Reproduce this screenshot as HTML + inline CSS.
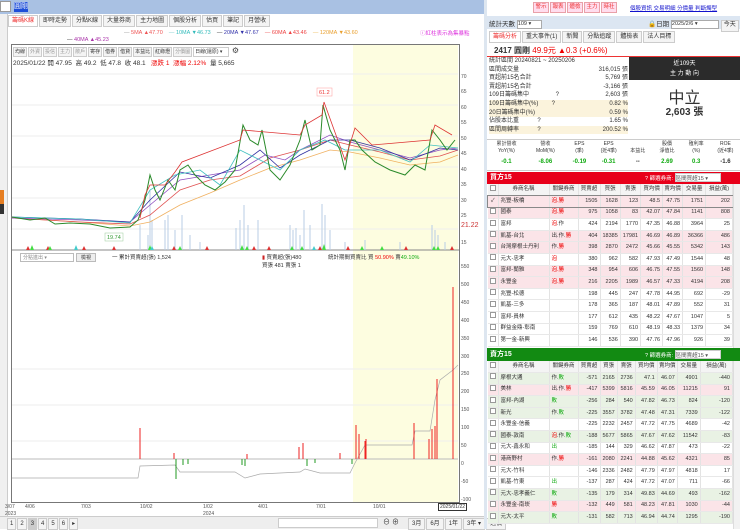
<!DOCTYPE html>
<html><head><meta charset="utf-8"><style>
*{margin:0;padding:0;box-sizing:border-box}
body{width:740px;height:529px;overflow:hidden;background:#fff;font-family:"Liberation Sans","Noto Sans CJK TC",sans-serif;font-size:6px;color:#333;position:relative}
.a{position:absolute;white-space:nowrap}
.tab{display:inline-block;border:1px solid #ccc;background:#f4f4f4;padding:1px 3px;height:12px;line-height:9px;font-size:6px;margin-right:1px}
.tb{display:inline-block;border:1px solid #ccc;background:#f4f4f4;padding:0 1px;height:10px;line-height:8px;font-size:5px;margin-right:1px}
.rb{display:inline-block;border:1px solid #e9a0a8;background:#fde;color:#e33;width:16px;height:11px;line-height:9px;font-size:5.5px;text-align:center;margin-right:1px}
table{border-collapse:collapse;font-size:5.5px}
td{height:11.6px;line-height:9px;border-right:1px solid #e3e3e3;border-bottom:1px solid #e8e8e8;padding:0 2px;text-align:right;white-space:nowrap}
td.n{text-align:left}
td.c{text-align:center;padding:0}
.cb{display:inline-block;width:6px;height:6px;border:1px solid #999;background:#fff}
.r{color:#e00}.g{color:#1a1}
.pk td{background:#fbe4e8}.gn td{background:#e9f2e4}
</style></head><body>
<div class="a" style="left:0;top:0;width:484px;height:14px;background:#a9c1e3"></div>
<div class="a" style="left:0;top:1px;width:11px;height:11px;background:#fff;border:1px solid #999"></div>
<div class="a" style="left:14px;top:2px;width:14px;height:10px;background:#1d4ed8;color:#fff;font-size:7px;line-height:10px">圓剛</div>
<div class="a" style="left:0;top:14px;width:8px;height:515px;background:#f0f0f0;border-right:1px solid #ccc"></div>
<div class="a" style="left:0;top:190px;width:4px;height:14px;background:#e67e22"></div>
<div class="a" style="left:0;top:204px;width:4px;height:10px;background:#333"></div>
<div class="a" style="left:8px;top:15px">
<span class="tab" style="color:#e33;background:#fff">籌碼K線</span><span class="tab">即時走勢</span><span class="tab">分點K線</span><span class="tab">大量券商</span><span class="tab">主力地圖</span><span class="tab">個股分析</span><span class="tab">估買</span><span class="tab">筆記</span><span class="tab">月營收</span></div>
<div class="a" style="left:124px;top:30px;font-size:5.5px"><span style="color:#999">—</span> <span style="color:#e55">5MA ▲47.70</span> &nbsp; &nbsp;<span style="color:#7cc">—</span> <span style="color:#3bb">10MA ▼46.73</span> &nbsp; &nbsp;<span>—</span> <span style="color:#33a">20MA ▼47.67</span> &nbsp; &nbsp;<span style="color:#e55">—</span> <span style="color:#e44">60MA ▲43.46</span> &nbsp; &nbsp;<span style="color:#eb5">—</span> <span style="color:#e9a030">120MA ▼43.60</span></div>
<div class="a" style="left:420px;top:29px;font-size:5.5px;color:#d3d">ⓘ紅柱表示為集暴點</div>
<div class="a" style="left:67px;top:37px;font-size:5.5px"><span>—</span> <span style="color:#a3a">40MA ▲45.23</span></div>
<div class="a" style="left:11px;top:44px;width:449px;height:459px;border:1px solid #777"></div>
<div class="a" style="left:353px;top:45px;width:105px;height:457px;background:#fdfde0"></div>
<div class="a" style="left:13px;top:46px;color:#999">
<span class="tb" style="color:#333">均線</span><span class="tb">外資</span><span class="tb">投信</span><span class="tb">主力</span><span class="tb">散戶</span><span class="tb" style="color:#333">寄存</span><span class="tb" style="color:#333">借券</span><span class="tb" style="color:#333">借貸</span><span class="tb" style="color:#333">本益比</span><span class="tb" style="color:#333">紅綠燈</span><span class="tb">分價圖</span><span class="tb" style="color:#333;background:#fff;width:36px">日線(還原) ▾</span> <span style="font-size:8px;color:#444">⚙</span></div>
<div class="a" style="left:13px;top:57px;font-size:6.5px">2025/01/22 開 47.95 &nbsp;高 49.2 &nbsp;低 47.8 &nbsp;收 48.1 &nbsp; <span class="r">漲跌 1 &nbsp;漲幅 2.12%</span> &nbsp;量 5,665</div>
<svg class="a" style="left:0;top:0" width="484" height="529">
<g stroke="#eee" stroke-width="1">
<line x1="12" y1="74" x2="458" y2="74"/><line x1="12" y1="105" x2="458" y2="105"/><line x1="12" y1="136" x2="458" y2="136"/><line x1="12" y1="167" x2="458" y2="167"/><line x1="12" y1="198" x2="458" y2="198"/><line x1="12" y1="229" x2="458" y2="229"/>
<line x1="12" y1="441" x2="458" y2="441"/><line x1="12" y1="405" x2="458" y2="405"/><line x1="12" y1="369" x2="458" y2="369"/>
</g>
<line x1="12" y1="250" x2="459" y2="250" stroke="#888"/>
<line x1="12" y1="459" x2="458" y2="459" stroke="#bbb"/>
<g stroke="#b8cde6" stroke-width="1">
<path d="M140 250v-25M148 250v-15M150 250v-60M152 250v-30M165 250v-30M168 250v-35M175 250v-20M182 250v-35M190 250v-15M200 250v-8M236 250v-22M240 250v-30M244 250v-45M248 250v-25M258 250v-30M290 250v-25M293 250v-20M296 250v-22M300 250v-15M304 250v-40M310 250v-25M322 250v-46M325 250v-35M330 250v-20M345 250v-8M365 250v-10M400 250v-8M432 250v-25M435 250v-20M438 250v-15M445 250v-8"/></g>
<g fill="none" stroke-width="0.8">
<polyline stroke="#f0b060" points="12,218 80,222 130,226 150,222 180,205 210,193 240,180 270,168 300,160 330,150 350,152 380,158 410,165 440,162 458,155"/>
<polyline stroke="#e05050" points="12,218 80,222 130,224 150,215 180,190 210,180 240,176 270,158 300,150 330,140 350,145 380,152 410,160 440,156 458,150"/>
<polyline stroke="#9050c0" points="12,218 80,220 130,222 150,205 180,180 210,175 240,170 265,155 285,160 300,150 330,135 350,142 380,150 410,158 440,150 458,148"/>
<polyline stroke="#3030a0" points="12,217 80,219 130,222 150,200 180,172 210,178 240,165 260,150 280,168 300,155 330,140 350,140 380,148 410,160 440,148 458,150"/>
<polyline stroke="#40c0c0" points="12,217 80,219 130,223 150,190 175,175 200,170 220,185 240,150 260,160 280,170 300,150 325,140 345,150 380,150 410,162 430,145 458,148"/>
</g>
<polyline fill="none" stroke="#2a8a2a" stroke-width="1" points="12,217 30,220 45,218 55,224 70,223 90,224 110,228 130,227 138,220 145,200 150,175 155,190 160,200 168,180 175,190 180,170 188,165 195,175 205,185 215,190 225,182 235,170 243,125 250,140 258,145 262,130 270,170 280,180 290,165 300,140 305,120 312,150 320,145 323,105 330,130 340,150 345,170 350,140 355,140 362,150 375,162 390,170 405,175 415,165 425,170 432,130 440,140 447,150 455,140"/>
<polyline fill="none" stroke="#d33" stroke-width="0.8" points="140,218 145,195 150,185 165,185 175,172 182,162 240,140 243,130 300,135 305,125 322,115 324,102 345,160 355,128 372,145 430,140 435,125 452,135"/>
<rect x="317" y="88" width="15" height="8" fill="#fff" stroke="#f99" stroke-width="0.5"/>
<text x="319" y="94" font-size="5.5" fill="#e33" font-family="Liberation Sans">61.2</text>
<rect x="105" y="233" width="18" height="8" fill="#fff" stroke="#9c9" stroke-width="0.5"/>
<text x="107" y="239" font-size="5.5" fill="#393" font-family="Liberation Sans">19.74</text>
<g fill="#d33"><path d="M26 250l2-4 2 4zM46 250l2-4 2 4zM82 250l2-4 2 4zM112 250l2-4 2 4zM172 250l2-4 2 4zM205 250l2-4 2 4zM252 250l2-4 2 4zM267 250l2-4 2 4zM318 250l2-4 2 4zM346 250l2-4 2 4zM404 250l2-4 2 4zM450 250l2-4 2 4z"/></g>
<g fill="#4d4"><path d="M30 250l2-5 2 5zM48 250l2-4 2 4zM148 250l2-5 2 5zM178 250l2-4 2 4zM240 250l2-5 2 5zM245 250l2-4 2 4zM290 250l2-4 2 4zM300 250l2-4 2 4zM322 250l2-6 2 6zM360 250l2-4 2 4zM380 250l2-4 2 4zM432 250l2-4 2 4zM436 250l2-4 2 4z"/></g>
<g fill="#4cc"><path d="M74 250l2-5 2 5zM150 250l2-4 2 4zM312 250l2-4 2 4z"/></g>
<polyline fill="none" stroke="#aaa" stroke-width="0.7" points="12,478 138,478 140,466 175,465 180,472 235,472 245,478 260,474 300,472 305,469 320,473 350,473 355,463 365,445 412,445 415,431 430,431 435,400 440,380 453,370 458,365"/>
<g stroke="#e22" stroke-width="1"><path d="M140 459v-31M174 459v-6M356 459v-34M359 459v-25M365 459v-18M366 459v-20M414 459v-36M429 459v-20M432 459v-30M435 459v-33M437 459v-80M453 459v-172M247 459v-5M299 459v-12M303 459v-16M340 459v-6"/></g>
<g stroke="#292" stroke-width="1"><path d="M176 459v20M183 459v6M188 459v5M242 459v6M245 459v7M307 459v7M352 459v5M315 459v4"/></g>
</svg>
<div class="a" style="left:461px;top:70px;font-size:5px;line-height:15.45px;color:#555">70<br>65<br>60<br>55<br>50<br>45<br>40<br>35<br>30<br>25</div>
<div class="a" style="left:461px;top:222px;font-size:7px;color:#c33">21.22</div>
<div class="a" style="left:461px;top:240px;font-size:5px;color:#555">15</div>
<div class="a" style="left:461px;top:259px;font-size:5px;line-height:17.9px;color:#555">550<br>500<br>450<br>400<br>350<br>300<br>250<br>200<br>150<br>100<br>50<br>0<br>-50<br>-100</div>
<div class="a" style="left:20px;top:253px;width:54px;height:9px;border:1px solid #bbb;font-size:5px;color:#888;padding-left:2px">分點進出 ▾</div>
<div class="a" style="left:76px;top:253px;width:20px;height:9px;border:1px solid #bbb;background:#eee;font-size:5px;text-align:center">檢視</div>
<div class="a" style="left:112px;top:253px;font-size:5.5px">一 累計買賣超(張) 1,524</div>
<div class="a" style="left:262px;top:253px;font-size:5.5px"><span style="color:#c22">▮</span> 買賣超(張)480<br>買張 481 賣張 1</div>
<div class="a" style="left:328px;top:253px;font-size:5.5px">統計期間買賣比 買 <span class="r">50.90%</span> 賣<span class="g">49.10%</span></div>
<div class="a" style="left:5px;top:504px;font-size:5px;color:#555;line-height:7px">3/07<br>2023</div>
<div class="a" style="left:25px;top:504px;font-size:5px;color:#555">4/06</div>
<div class="a" style="left:81px;top:504px;font-size:5px;color:#555">7/03</div>
<div class="a" style="left:140px;top:504px;font-size:5px;color:#555">10/02</div>
<div class="a" style="left:203px;top:504px;font-size:5px;color:#555;line-height:7px">1/02<br>2024</div>
<div class="a" style="left:258px;top:504px;font-size:5px;color:#555">4/01</div>
<div class="a" style="left:316px;top:504px;font-size:5px;color:#555">7/01</div>
<div class="a" style="left:373px;top:504px;font-size:5px;color:#555">10/01</div>
<div class="a" style="left:438px;top:503px;font-size:5px;border:1px solid #333;background:#fff;padding:0 1px">2025/01/22</div>
<div class="a" style="left:0;top:516px;width:484px;height:13px;background:#eee;border-top:1px solid #ccc"></div>
<div class="a" style="left:7px;top:518px;font-size:5.5px"><span class="tab" style="padding:1px 2px">1</span><span class="tab" style="padding:1px 2px">2</span><span class="tab" style="padding:1px 2px;background:#ccc">3</span><span class="tab" style="padding:1px 2px">4</span><span class="tab" style="padding:1px 2px">5</span><span class="tab" style="padding:1px 2px">6</span><span class="tab" style="padding:1px 2px">▸</span></div>
<div class="a" style="left:278px;top:518px;width:100px;height:10px;background:#fff;border:1px solid #ccc"></div>
<div class="a" style="left:383px;top:517px;font-size:7px">⊖ ⊕</div>
<div class="a" style="left:408px;top:518px;font-size:5.5px"><span class="tab">3月</span><span class="tab">6月</span><span class="tab">1年</span><span class="tab">3年 ▾</span><span class="tab">週價</span></div>
<div class="a" style="left:484px;top:0;width:3px;height:529px;background:#dde6f0"></div>

<div class="a" style="left:533px;top:2px"><span class="rb">警示</span><span class="rb">報表</span><span class="rb">體檢</span><span class="rb">主力</span><span class="rb">時社</span></div>
<div class="a" style="left:630px;top:4px;font-size:5.5px;color:#11c;text-decoration:underline">個股資訊 交易明細 分價量 判斷燭型</div>
<div class="a" style="left:487px;top:16px;width:253px;height:13px;background:#dce6f2"></div>
<div class="a" style="left:489px;top:18px;font-size:6.5px">統計天數 <span style="display:inline-block;width:25px;height:9px;background:#fff;border:1px solid #aaa;font-size:5.5px;vertical-align:middle">109 ▾</span></div>
<div class="a" style="left:648px;top:18px;font-size:6.5px">🔒日期 <span style="display:inline-block;width:48px;height:9px;background:#fff;border:1px solid #aaa;font-size:5.5px;vertical-align:middle">2025/2/6 ▾</span> <span class="tab" style="padding:0 2px">今天</span></div>
<div class="a" style="left:489px;top:31px;font-size:5.5px"><span class="tab" style="color:#e33;background:#fff">籌碼分析</span><span class="tab">重大事件(1)</span><span class="tab">新聞</span><span class="tab">分點追蹤</span><span class="tab">體檢表</span><span class="tab">法人目標</span></div>
<div class="a" style="left:487px;top:43px;width:253px;height:14px;border-bottom:1px solid #e33"></div>
<div class="a" style="left:494px;top:45px;font-size:8px;font-weight:bold">2417 圓剛 <span class="r" style="font-weight:normal">49.9元 ▲0.3 (+0.6%)</span></div>
<div class="a" style="left:489px;top:57px;width:139px;font-size:6px;line-height:8.6px">
<div style="display:flex;justify-content:space-between"><span>統計區間 20240821 ~ 20250206</span></div>
<div style="display:flex;justify-content:space-between"><span>區間成交量</span><span>316,015 張</span></div>
<div style="display:flex;justify-content:space-between"><span>買超前15名合計</span><span>5,769 張</span></div>
<div style="display:flex;justify-content:space-between"><span>賣超前15名合計</span><span>-3,166 張</span></div>
<div style="display:flex;justify-content:space-between"><span>109日籌碼集中 &nbsp; &nbsp; &nbsp; &nbsp; &nbsp; &nbsp; &nbsp; &nbsp;?</span><span>2,603 張</span></div>
<div style="display:flex;justify-content:space-between;background:#fbf3dc"><span>109日籌碼集中(%) &nbsp; &nbsp; &nbsp; &nbsp;?</span><span>0.82 %</span></div>
<div style="display:flex;justify-content:space-between;background:#fbf3dc"><span>20日籌碼集中(%)</span><span>0.59 %</span></div>
<div style="display:flex;justify-content:space-between"><span>佔股本比重 &nbsp; &nbsp; &nbsp; &nbsp; &nbsp; ?</span><span>1.65 %</span></div>
<div style="display:flex;justify-content:space-between;background:#fbf3dc"><span>區間周轉率 &nbsp; &nbsp; &nbsp; &nbsp; &nbsp; ?</span><span>200.52 %</span></div>
</div>
<div class="a" style="left:629px;top:57px;width:111px;height:23px;background:#2b2b2b;color:#fff;text-align:center;font-size:6px;line-height:10px;padding-top:2px">近109天<br>主 力 動 向</div>
<div class="a" style="left:629px;top:84px;width:111px;text-align:center;font-size:16px;color:#333">中立</div>
<div class="a" style="left:629px;top:103px;width:111px;text-align:center;font-size:10px;font-weight:bold">2,603 張</div>
<div class="a" style="left:487px;top:139px;width:253px;height:32px;border-top:1px solid #ccc;border-bottom:1px solid #ccc"></div>
<div class="a" style="left:487px;top:141px;width:253px;display:flex;font-size:5px;text-align:center;line-height:7px">
<div style="flex:1">累計營收<br>YoY(%)</div><div style="flex:1">營收<br>MoM(%)</div><div style="flex:.75">EPS<br>(季)</div><div style="flex:.75">EPS<br>(近4季)</div><div style="flex:.75"><br>本益比</div><div style="flex:.75">股價<br>淨值比</div><div style="flex:.75">殖利率<br>(%)</div><div style="flex:.75">ROE<br>(近4季)</div></div>
<div class="a" style="left:487px;top:159px;width:253px;display:flex;font-size:6px;font-weight:bold;text-align:center">
<div style="flex:1" class="g">-0.1</div><div style="flex:1" class="g">-8.06</div><div style="flex:.75" class="g">-0.19</div><div style="flex:.75" class="g">-0.31</div><div style="flex:.75">--</div><div style="flex:.75" class="g">2.69</div><div style="flex:.75" class="g">0.3</div><div style="flex:.75">-1.6</div></div>

<div class="a" style="left:487px;top:172px;width:253px;height:12px;background:#e8001a;color:#fff;font-size:7px;font-weight:bold;padding-left:3px;line-height:12px">買方15</div>
<div class="a" style="left:645px;top:173px;font-size:5.5px;color:#fff">? 篩選券商: <span style="display:inline-block;width:46px;height:9px;background:#fff;color:#555;border:1px solid #ccc">區間買超15 ▾</span></div>
<div class="a" style="left:488px;top:184px">
<table style="width:245px">
<tr style="background:#f4f4f4"><td class="c" style="width:10px"><span class="cb"></span></td><td class="c" style="width:51px">券商名稱</td><td class="c" style="width:29px">關鍵券商</td><td class="c" style="width:22px">買賣超</td><td class="c" style="width:16px">買張</td><td class="c" style="width:18px">賣張</td><td class="c" style="width:22px">買均價</td><td class="c" style="width:20px">賣均價</td><td class="c" style="width:23px">交易量</td><td class="c">損益(萬)</td></tr>
<tr class="pk" style="outline:1px solid #888"><td class="c">✓</td><td class="n">兆豐-板橋</td><td class="n r">泡.勝</td><td>1505</td><td>1628</td><td>123</td><td>48.5</td><td>47.75</td><td>1751</td><td>202</td></tr>
<tr class="pk"><td class="c"><span class="cb"></span></td><td class="n">國泰</td><td class="n r">泡.勝</td><td>975</td><td>1058</td><td>83</td><td>42.07</td><td>47.84</td><td>1141</td><td>808</td></tr>
<tr><td class="c"><span class="cb"></span></td><td class="n">富邦</td><td class="n"><span class="r">泡</span>.作</td><td>424</td><td>2194</td><td>1770</td><td>47.35</td><td>46.88</td><td>3964</td><td>25</td></tr>
<tr class="pk"><td class="c"><span class="cb"></span></td><td class="n">凱基-台北</td><td class="n">出.作.<span class="r">勝</span></td><td>404</td><td>18385</td><td>17981</td><td>46.69</td><td>46.89</td><td>36366</td><td>486</td></tr>
<tr class="pk"><td class="c"><span class="cb"></span></td><td class="n">台灣摩根士丹利</td><td class="n">作.<span class="r">勝</span></td><td>398</td><td>2870</td><td>2472</td><td>45.66</td><td>45.55</td><td>5342</td><td>143</td></tr>
<tr><td class="c"><span class="cb"></span></td><td class="n">元大-忠孝</td><td class="n r">泡</td><td>380</td><td>962</td><td>582</td><td>47.93</td><td>47.49</td><td>1544</td><td>48</td></tr>
<tr class="pk"><td class="c"><span class="cb"></span></td><td class="n">富邦-蘭雅</td><td class="n r">泡.勝</td><td>348</td><td>954</td><td>606</td><td>46.75</td><td>47.55</td><td>1560</td><td>148</td></tr>
<tr class="pk"><td class="c"><span class="cb"></span></td><td class="n">永豐金</td><td class="n r">泡.勝</td><td>216</td><td>2205</td><td>1989</td><td>46.57</td><td>47.33</td><td>4194</td><td>208</td></tr>
<tr><td class="c"><span class="cb"></span></td><td class="n">兆豐-松德</td><td></td><td>198</td><td>445</td><td>247</td><td>47.78</td><td>44.95</td><td>692</td><td>-29</td></tr>
<tr><td class="c"><span class="cb"></span></td><td class="n">凱基-三多</td><td></td><td>178</td><td>365</td><td>187</td><td>48.01</td><td>47.89</td><td>552</td><td>31</td></tr>
<tr><td class="c"><span class="cb"></span></td><td class="n">富邦-員林</td><td></td><td>177</td><td>612</td><td>435</td><td>48.22</td><td>47.67</td><td>1047</td><td>5</td></tr>
<tr><td class="c"><span class="cb"></span></td><td class="n">群益金鼎-彰南</td><td></td><td>159</td><td>769</td><td>610</td><td>48.19</td><td>48.33</td><td>1379</td><td>34</td></tr>
<tr><td class="c"><span class="cb"></span></td><td class="n">第一金-新興</td><td></td><td>146</td><td>536</td><td>390</td><td>47.76</td><td>47.96</td><td>926</td><td>39</td></tr>
</table></div>
<div class="a" style="left:733px;top:184px;width:7px;height:164px;background:#f2f2f2;border-left:1px solid #ddd"></div>

<div class="a" style="left:487px;top:348px;width:253px;height:13px;background:#128a12;color:#fff;font-size:7px;font-weight:bold;padding-left:3px;line-height:13px">賣方15</div>
<div class="a" style="left:645px;top:350px;font-size:5.5px;color:#fff">? 篩選券商: <span style="display:inline-block;width:46px;height:9px;background:#fff;color:#555;border:1px solid #ccc">區間賣超15 ▾</span></div>
<div class="a" style="left:488px;top:361px">
<table style="width:245px">
<tr style="background:#f4f4f4"><td class="c" style="width:10px"><span class="cb"></span></td><td class="c" style="width:51px">券商名稱</td><td class="c" style="width:29px">關鍵券商</td><td class="c" style="width:22px">買賣超</td><td class="c" style="width:16px">買張</td><td class="c" style="width:18px">賣張</td><td class="c" style="width:22px">買均價</td><td class="c" style="width:20px">賣均價</td><td class="c" style="width:23px">交易量</td><td class="c">損益(萬)</td></tr>
<tr class="gn"><td class="c"><span class="cb"></span></td><td class="n">摩根大通</td><td class="n">作.<span class="g">敗</span></td><td>-571</td><td>2165</td><td>2736</td><td>47.1</td><td>46.07</td><td>4901</td><td>-440</td></tr>
<tr class="pk"><td class="c"><span class="cb"></span></td><td class="n">美林</td><td class="n">出.作.<span class="r">勝</span></td><td>-417</td><td>5399</td><td>5816</td><td>45.59</td><td>46.05</td><td>11215</td><td>91</td></tr>
<tr class="gn"><td class="c"><span class="cb"></span></td><td class="n">富邦-內湖</td><td class="n g">敗</td><td>-256</td><td>284</td><td>540</td><td>47.82</td><td>46.73</td><td>824</td><td>-120</td></tr>
<tr class="gn"><td class="c"><span class="cb"></span></td><td class="n">新光</td><td class="n">作.<span class="g">敗</span></td><td>-225</td><td>3557</td><td>3782</td><td>47.48</td><td>47.31</td><td>7339</td><td>-122</td></tr>
<tr><td class="c"><span class="cb"></span></td><td class="n">永豐金-信義</td><td></td><td>-225</td><td>2232</td><td>2457</td><td>47.72</td><td>47.75</td><td>4689</td><td>-42</td></tr>
<tr class="gn"><td class="c"><span class="cb"></span></td><td class="n">國泰-敦南</td><td class="n"><span class="r">泡</span>.作.<span class="g">敗</span></td><td>-188</td><td>5677</td><td>5865</td><td>47.67</td><td>47.62</td><td>11542</td><td>-83</td></tr>
<tr><td class="c"><span class="cb"></span></td><td class="n">元大-鑫永和</td><td class="n g">出</td><td>-185</td><td>144</td><td>329</td><td>46.62</td><td>47.87</td><td>473</td><td>-22</td></tr>
<tr class="pk"><td class="c"><span class="cb"></span></td><td class="n">港商野村</td><td class="n">作.<span class="r">勝</span></td><td>-161</td><td>2080</td><td>2241</td><td>44.88</td><td>45.62</td><td>4321</td><td>85</td></tr>
<tr><td class="c"><span class="cb"></span></td><td class="n">元大-竹科</td><td></td><td>-146</td><td>2336</td><td>2482</td><td>47.79</td><td>47.97</td><td>4818</td><td>17</td></tr>
<tr><td class="c"><span class="cb"></span></td><td class="n">凱基-竹東</td><td class="n g">出</td><td>-137</td><td>287</td><td>424</td><td>47.72</td><td>47.07</td><td>711</td><td>-66</td></tr>
<tr class="gn"><td class="c"><span class="cb"></span></td><td class="n">元大-忠孝義仁</td><td class="n g">敗</td><td>-135</td><td>179</td><td>314</td><td>49.83</td><td>44.69</td><td>493</td><td>-162</td></tr>
<tr class="pk"><td class="c"><span class="cb"></span></td><td class="n">永豐金-南崁</td><td class="n r">勝</td><td>-132</td><td>449</td><td>581</td><td>48.23</td><td>47.81</td><td>1030</td><td>-44</td></tr>
<tr class="gn"><td class="c"><span class="cb"></span></td><td class="n">元大-太平</td><td class="n g">敗</td><td>-131</td><td>582</td><td>713</td><td>46.94</td><td>44.74</td><td>1295</td><td>-190</td></tr>
</table></div>
<div class="a" style="left:733px;top:361px;width:7px;height:168px;background:#f2f2f2;border-left:1px solid #ddd"></div>
</body></html>
